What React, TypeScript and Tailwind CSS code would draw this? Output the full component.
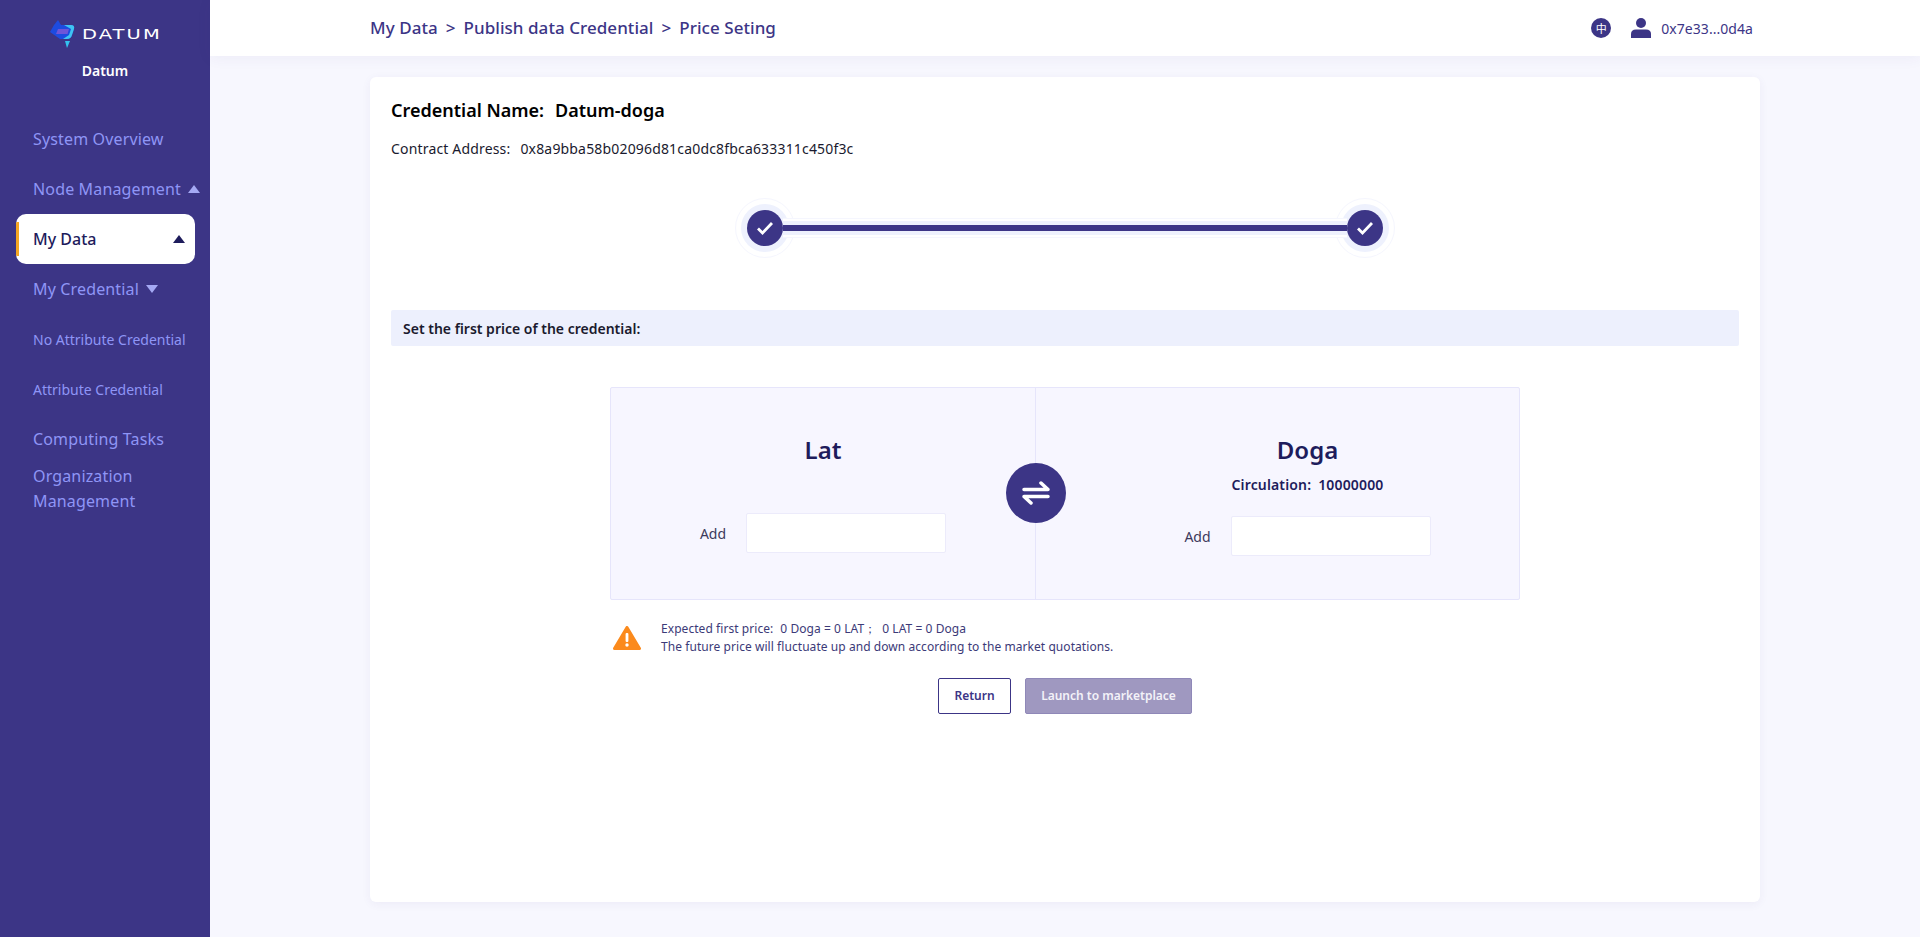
import type { ReactNode } from "react";

const FONT = "[font-family:'Noto_Sans',sans-serif]";

function Caret({ up, className }: { up: boolean; className: string }) {
  return (
    <svg width="12" height="8" viewBox="0 0 12 8" className={className}>
      <path d={up ? "M6 0 L12 8 L0 8 Z" : "M6 8 L12 0 L0 0 Z"} fill="currentColor" />
    </svg>
  );
}

function Logo() {
  return (
    <div className="flex h-[28px] items-center pl-[50px]">
      <svg width="25" height="28" viewBox="0 0 25 28">
        <path d="M8 0 L11 5 L4 5 Z" fill="#1d4be0" />
        <path d="M4 5 L21 5 Q25 5 24 9 L22 15 Q21 19 17 19 L10 19 L0 12 Z" fill="#1d4be0" />
        <path d="M14 5 L21 5 Q25 5 24 9 L22 15 Q21 19 17 19 L13 19 L19 15 L21 9 Z" fill="#3fc4f2" />
        <path d="M8 9 L19 9 L17.5 14 L6 14 Z" fill="#6f55d8" />
        <path d="M15 21 L20 21 L17 28 Z" fill="#33c3f0" />
      </svg>
      <div className="ml-[7px] w-[78px]">
        <span className="inline-block origin-left -translate-y-[1px] scale-x-[1.39] text-[14px] leading-none tracking-[1.5px] text-white [font-family:'DejaVu_Sans',sans-serif]">
          DATUM
        </span>
      </div>
    </div>
  );
}

function NavItem({ children, small, caret }: { children: ReactNode; small?: boolean; caret?: boolean | "down" }) {
  return (
    <div
      className={`flex h-[50px] items-center gap-[7px] pl-[33px] whitespace-nowrap text-[#8f95f6] ${
        small ? "text-[14px]" : "text-[16px] tracking-[0.15px]"
      }`}
    >
      {children}
      {caret ? <Caret up={caret !== "down"} className="text-[#a5a9f4]" /> : null}
    </div>
  );
}

function Sidebar() {
  return (
    <aside className="flex w-[210px] shrink-0 flex-col bg-[#3c3586]">
      <div className="pt-[20px]">
        <Logo />
        <p className="mt-[13px] text-center text-[14px] leading-[20px] font-semibold text-white">Datum</p>
      </div>
      <nav className="mt-[33px]">
        <NavItem>System Overview</NavItem>
        <NavItem caret>Node Management</NavItem>
        <div className="mr-[15px] ml-[16px] flex h-[50px] items-center overflow-hidden rounded-[10px] bg-white pr-[10px] text-[16px] font-medium text-[#1e1c5c]">
          <div className="h-[34px] w-[3px] bg-[#f5a623]" />
          <span className="ml-[14px] flex-1">My Data</span>
          <Caret up className="text-[#1e1c5c]" />
        </div>
        <NavItem caret="down">My Credential</NavItem>
        <NavItem small>No Attribute Credential</NavItem>
        <NavItem small>Attribute Credential</NavItem>
        <NavItem>Computing Tasks</NavItem>
        <div className="pr-[40px] pl-[33px] text-[16px] leading-[25px] tracking-[0.15px] text-[#8f95f6]">
          Organization Management
        </div>
      </nav>
    </aside>
  );
}

function Header() {
  return (
    <header className="relative z-10 flex h-[56px] shrink-0 items-center justify-between bg-white pr-[167px] pl-[160px] shadow-[0_2px_14px_rgba(60,53,134,0.06)]">
      <div className="flex items-center text-[17px] font-medium tracking-[0.05px] whitespace-nowrap text-[#3c3586]">
        <span>My Data</span>
        <span className="mx-[8px]">&gt;</span>
        <span>Publish data Credential</span>
        <span className="mx-[8px]">&gt;</span>
        <span>Price Seting</span>
      </div>
      <div className="flex items-center text-[#3c3586]">
        <div className="flex h-[20px] w-[20px] items-center justify-center rounded-full bg-[#3c3586] text-[11px] leading-none text-white [font-family:'Noto_Sans_CJK_SC',sans-serif]">
          中
        </div>
        <svg width="20" height="20" viewBox="0 0 20 20" className="ml-[20px]">
          <circle cx="10" cy="5" r="5" fill="#3c3586" />
          <path d="M0 20 V16 Q0 11.5 5 11.5 H15 Q20 11.5 20 16 V20 Z" fill="#3c3586" />
        </svg>
        <span className="ml-[10px] text-[14px] tracking-[0.05px] whitespace-nowrap">0x7e33...0d4a</span>
      </div>
    </header>
  );
}

function Steps() {
  const node = (
    <div className="relative z-10 flex h-[60px] w-[60px] shrink-0 items-center justify-center rounded-full border border-[#f5f6fe] bg-white">
      <div className="flex h-[48px] w-[48px] items-center justify-center rounded-full bg-[#eef1fd]">
        <div className="flex h-[36px] w-[36px] items-center justify-center rounded-full bg-[#3c3586]">
          <svg width="18" height="14" viewBox="0 0 18 14">
            <path d="M2 7.5 L6.5 12 L16 2" fill="none" stroke="#fff" strokeWidth="2.8" />
          </svg>
        </div>
      </div>
    </div>
  );
  return (
    <div className="mx-auto mt-[38px] flex w-[660px] items-center">
      {node}
      <div className="relative z-20 -mx-[12px] h-[20px] flex-1 border-y border-[#f5f6fe] bg-white py-[2px]">
        <div className="flex h-full items-center bg-[#eef1fd]">
          <div className="h-[6px] w-full bg-[#3c3586]" />
        </div>
      </div>
      {node}
    </div>
  );
}

function AddRow() {
  return (
    <div className="flex items-center justify-center gap-[20px]">
      <span className="text-[14px] text-[#3d3a5c]">Add</span>
      <input className="h-[40px] w-[200px] rounded-[2px] border border-[#ecebfb] bg-white outline-none" />
    </div>
  );
}

function Exchange() {
  return (
    <div className="relative mx-auto mt-[41px] flex h-[213px] w-[910px] rounded-[2px] border border-[#e6e5fb] bg-[#f7f6ff]">
      <div className="w-[425px] border-r border-[#e6e5fb] pt-[45px]">
        <p className="text-center text-[24px] leading-[34px] font-semibold text-[#1e1c5c]">Lat</p>
        <div className="mt-[46px]">
          <AddRow />
        </div>
      </div>
      <div className="flex-1 pt-[45px] pl-[60px]">
        <p className="text-center text-[24px] leading-[34px] font-semibold text-[#1e1c5c]">Doga</p>
        <p className="mt-[8px] text-center text-[14px] leading-[20px] font-semibold tracking-[0.15px] text-[#1e1c5c]">
          Circulation:<span className="ml-[7px]">10000000</span>
        </p>
        <div className="mt-[21px]">
          <AddRow />
        </div>
      </div>
      <div className="absolute top-[75px] left-[395px] flex h-[60px] w-[60px] items-center justify-center rounded-full bg-[#3c3586]">
        <svg width="28" height="24" viewBox="0 0 28 24" fill="none" stroke="#fff" strokeWidth="3.5" strokeLinecap="round" strokeLinejoin="round">
          <path d="M2 8.5 H26 L19 2" />
          <path d="M26 15.5 H2 L9 22" />
        </svg>
      </div>
    </div>
  );
}

export default function App() {
  return (
    <div className={`flex h-[937px] w-[1920px] overflow-hidden bg-[#f7f7fe] ${FONT}`}>
      <Sidebar />
      <div className="flex min-w-0 flex-1 flex-col">
        <Header />
        <main className="px-[160px] pt-[21px]">
          <div className="h-[825px] w-[1390px] rounded-[6px] bg-white px-[21px] pt-[20px] shadow-[0_2px_10px_rgba(60,53,134,0.06)]">
            <h1 className="text-[18px] leading-[26px] font-semibold whitespace-nowrap text-black">
              Credential Name:<span className="ml-[11px]">Datum-doga</span>
            </h1>
            <p className="mt-[16px] text-[14px] leading-[20px] tracking-[0.17px] whitespace-nowrap text-[#1a1a2e]">
              Contract Address:<span className="ml-[10px]">0x8a9bba58b02096d81ca0dc8fbca633311c450f3c</span>
            </p>
            <div className="pt-[1px]">
              <Steps />
            </div>
            <div className="mt-[52px] flex h-[36px] items-center rounded-[2px] bg-[#edf0fd] px-[12px] text-[14px] font-semibold text-[#1a1a2e]">
              Set the first price of the credential:
            </div>
            <Exchange />
            <div className="mx-auto mt-[20px] flex w-[910px] items-center">
              <svg width="28" height="24" viewBox="0 0 28 24" className="ml-[3px]">
                <path d="M14 1.5 L26.5 22.5 H1.5 Z" fill="#fb8a1c" stroke="#fb8a1c" strokeWidth="3" strokeLinejoin="round" />
                <rect x="12.6" y="7" width="2.8" height="9" rx="1" fill="#fff" />
                <circle cx="14" cy="19" r="1.7" fill="#fff" />
              </svg>
              <div className="ml-[20px] text-[12px] leading-[18px] tracking-[0.06px] whitespace-nowrap text-[#3c3a78]">
                <p>
                  Expected first price:<span className="ml-[7px]">0 Doga = 0 LAT；</span>
                  <span className="ml-[6px]">0 LAT = 0 Doga</span>
                </p>
                <p>The future price will fluctuate up and down according to the market quotations.</p>
              </div>
            </div>
            <div className="mt-[22px] ml-[547px] flex gap-[14px]">
              <button className="h-[36px] w-[73px] rounded-[2px] border border-[#3c3586] bg-white text-[12px] font-semibold text-[#3c3586]">
                Return
              </button>
              <button className="h-[36px] w-[167px] rounded-[2px] border border-[#8f88b8] bg-[#9f98c0] text-[12px] font-semibold text-[#f3f2f8]">
                Launch to marketplace
              </button>
            </div>
          </div>
        </main>
      </div>
    </div>
  );
}
